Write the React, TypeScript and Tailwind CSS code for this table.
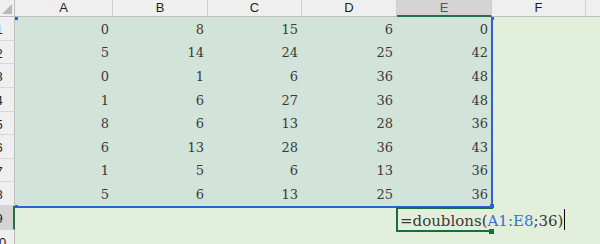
import React from "react";

type Col = { label: string; w: string };

const columns: Col[] = [
  { label: "A", w: "w-[98px]" },
  { label: "B", w: "w-[95px]" },
  { label: "C", w: "w-[94px]" },
  { label: "D", w: "w-[95px]" },
  { label: "E", w: "w-[95px]" },
  { label: "F", w: "w-[94px]" },
];

const data: number[][] = [
  [0, 8, 15, 6, 0],
  [5, 14, 24, 25, 42],
  [0, 1, 6, 36, 48],
  [1, 6, 27, 36, 48],
  [8, 6, 13, 28, 36],
  [6, 13, 28, 36, 43],
  [1, 5, 6, 13, 36],
  [5, 6, 13, 25, 36],
];

const rowHeights = [
  "h-[24px]",
  "h-[23px]",
  "h-[24px]",
  "h-[24px]",
  "h-[23px]",
  "h-[24px]",
  "h-[23px]",
  "h-[24px]",
  "h-[24px]",
  "h-[24px]",
];

const sheetBg = "bg-[#e2efda]";
const rangeBg = "bg-[#d2e3d9]";

function RowHeader({ n, active }: { n: number; active?: boolean }) {
  return (
    <div
      className={
        "flex w-[15px] shrink-0 items-center overflow-hidden border-b border-[#d6d6d6] " +
        (active
          ? "border-r-2 border-r-[#217346] bg-[#d4d4d4]"
          : "border-r border-r-[#bdbdbd] bg-[#efefef]")
      }
    >
      <div className="-ml-[17px] w-[32px] shrink-0 pt-[2px] text-center font-['Liberation_Sans',Arial,sans-serif] text-[13px] leading-none text-[#1f1f1f]">
        {n}
      </div>
    </div>
  );
}

export default function App() {
  return (
    <div className={"relative h-[244px] w-[600px] overflow-hidden " + sheetBg}>
      {/* column headers */}
      <div className="flex h-[17px]">
        <div className="flex w-[15px] shrink-0 items-end justify-end border-r border-b border-[#bdbdbd] bg-[#efefef] p-[2px]">
          <svg width="10" height="10" viewBox="0 0 10 10">
            <polygon points="10,0 10,10 0,10" fill="#b9b9b9" />
          </svg>
        </div>
        {columns.map((c) =>
          c.label === "E" ? (
            <div
              key={c.label}
              className={
                c.w +
                " flex shrink-0 items-center justify-center border-r border-r-[#cfcfcf] border-b-2 border-b-[#217346] bg-[#d4d4d4] font-['Liberation_Sans',Arial,sans-serif] text-[13px] text-[#217346]"
              }
            >
              {c.label}
            </div>
          ) : (
            <div
              key={c.label}
              className={
                c.w +
                " flex shrink-0 items-center justify-center border-r border-b border-r-[#d0d0d0] border-b-[#bdbdbd] bg-[#efefef] font-['Liberation_Sans',Arial,sans-serif] text-[13px] text-[#1f1f1f]"
              }
            >
              {c.label}
            </div>
          )
        )}
        <div className="flex-1 border-b border-[#bdbdbd] bg-[#efefef]" />
      </div>

      {/* rows */}
      {rowHeights.map((h, r) => (
        <div key={r} className={"flex " + h}>
          <RowHeader n={r + 1} active={r === 8} />
          {columns.map((c, ci) => {
            const inRange = r < 8 && ci < 5;
            return (
              <div
                key={c.label}
                className={
                  c.w +
                  " flex shrink-0 items-end justify-end pr-[4px] pb-[5px] font-['DejaVu_Serif',Georgia,serif] text-[13px] leading-[13px] text-[#3a3a3a] " +
                  (inRange ? rangeBg : sheetBg)
                }
              >
                {inRange ? data[r][ci] : ""}
              </div>
            );
          })}
          <div className="flex-1" />
        </div>
      ))}

      {/* referenced range outline */}
      <div className="absolute left-[15px] top-[17px] h-[191px] w-[478px] border-r-2 border-b-2 border-[#2f62cf]" />
      <div className="absolute left-[15px] top-[17px] h-[3px] w-[3px] bg-[#2f62cf]" />
      <div className="absolute left-[491px] top-[17px] h-[3px] w-[3px] bg-[#2f62cf]" />
      <div className="absolute left-[15px] top-[205px] h-[3px] w-[3px] bg-[#2f62cf]" />

      {/* cell in edit mode */}
      <div className="absolute left-[396px] top-[207px] h-[25px] w-[97px] border-y-2 border-l-2 border-[#1f6b40]" />
      <div className="absolute left-[490px] top-[204px] h-[4px] w-[4px] bg-[#2f62cf]" />
      <div className="absolute left-[489px] top-[229px] h-[5px] w-[5px] bg-[#1f6b40]" />
      <div className="absolute left-[400px] top-[209px] flex h-[21px] items-end whitespace-nowrap font-['DejaVu_Serif',Georgia,serif] text-[15px] leading-[16px] text-[#3a3a3a]">
        <span className="pb-[1px]">
          =doublons(<span className="text-[#3b6fd4]">A1:E8</span>;36)
        </span>
        <span className="ml-[1px] h-[21px] w-[1px] bg-black" />
      </div>
    </div>
  );
}
